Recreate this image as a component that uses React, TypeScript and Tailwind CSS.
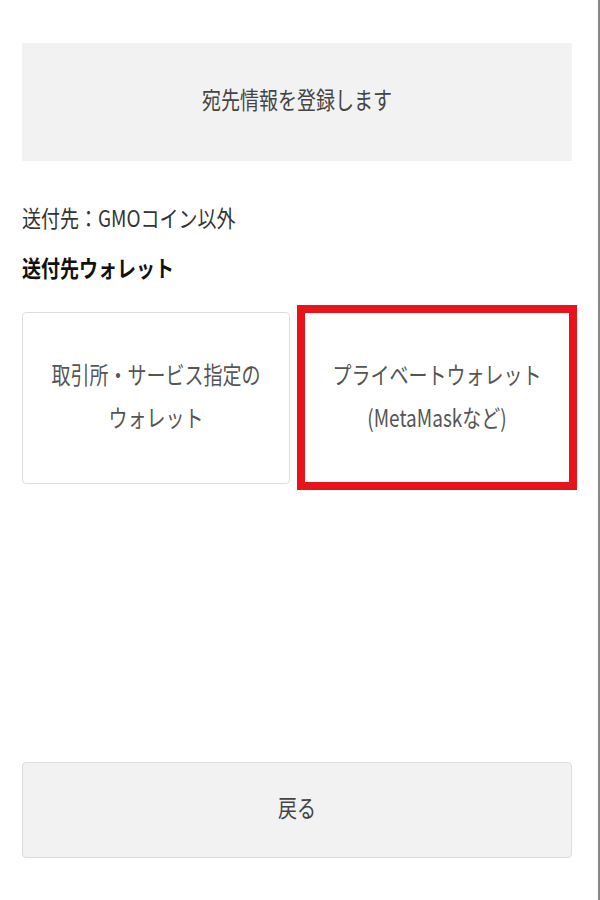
const jp = { fontFamily: '"Noto Sans CJK JP", "Noto Sans", sans-serif' };

const App = () => {
  return (
    <div
      className="relative w-[600px] h-[900px] bg-white text-[#333] border-r-2 border-[#888]"
      style={jp}
    >
      <div className="px-[22px] pt-[43px] pr-[26px]">
        <div className="h-[118px] pb-[5px] bg-[#f2f2f2] flex items-center justify-center">
          <span className="text-[19px] text-[#444] inline-block scale-y-[1.25]">
            宛先情報を登録します
          </span>
        </div>
        <p className="mt-[43px] text-[19px] leading-[26px] inline-block scale-y-[1.2] origin-left">
          送付先：GMOコイン以外
        </p>
        <p className="mt-[24px] text-[19px] leading-[26px] font-bold text-[#111] scale-y-[1.2] origin-left">
          送付先ウォレット
        </p>
        <div className="mt-[25px] flex gap-[7px] items-center">
          <button className="w-[268px] shrink-0 h-[172px] pb-[6px] bg-white border border-[#ddd] rounded-[4px] flex flex-col items-center justify-center text-[19px] leading-[43px] text-[#555]">
            <span className="scale-y-[1.25]">取引所・サービス指定の</span>
            <span className="scale-y-[1.25]">ウォレット</span>
          </button>
          <button className="w-[280px] shrink-0 h-[185px] pb-[6px] bg-white border-[8px] border-[#e8141c] flex flex-col items-center justify-center text-[19px] leading-[43px] text-[#555]">
            <span className="scale-y-[1.25]">プライベートウォレット</span>
            <span className="scale-y-[1.25]">(MetaMaskなど)</span>
          </button>
        </div>
      </div>
      <div className="absolute left-[22px] right-[26px] top-[762px]">
        <button className="w-full h-[96px] pb-[5px] bg-[#f2f2f2] border border-[#ddd] rounded-[4px] flex items-center justify-center text-[19px] text-[#444]">
          <span className="scale-y-[1.25]">戻る</span>
        </button>
      </div>
    </div>
  );
};

export default App;
